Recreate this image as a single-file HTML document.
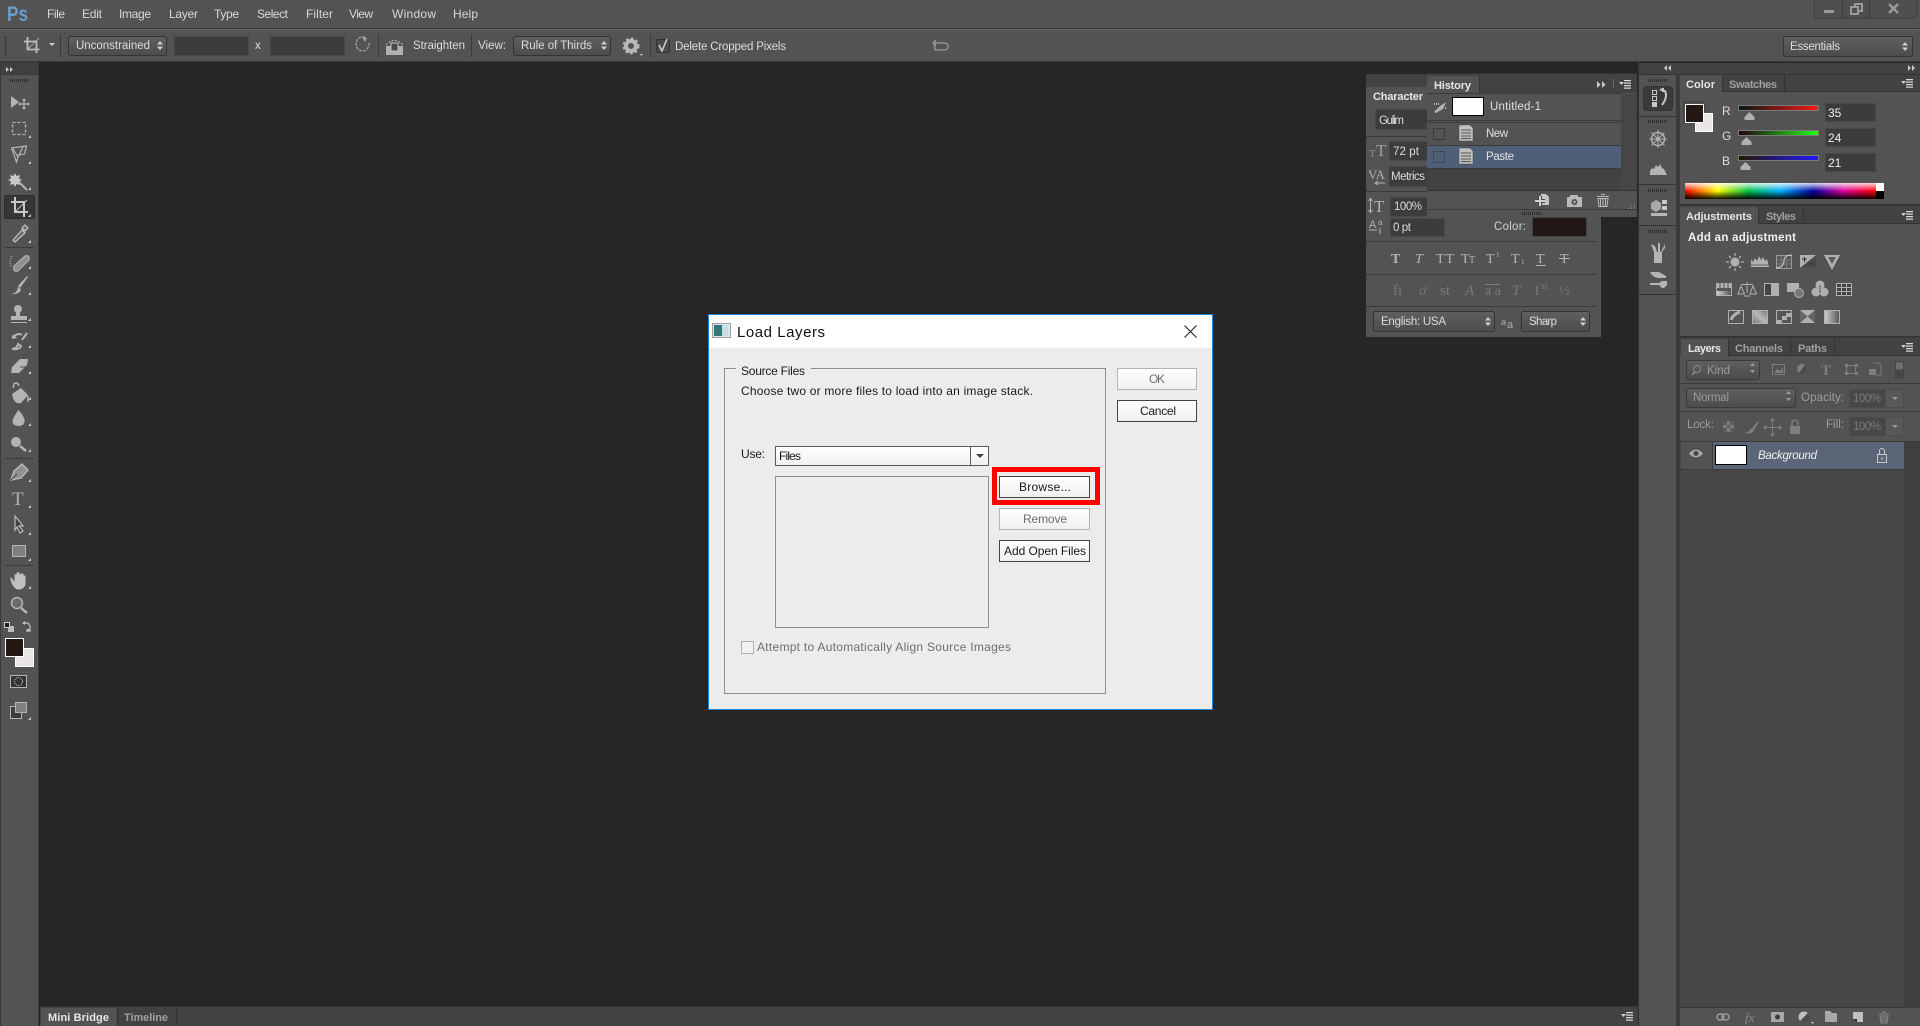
<!DOCTYPE html>
<html><head><meta charset="utf-8"><title>Load Layers</title>
<style>
html,body{margin:0;padding:0;background:#262626;width:1920px;height:1026px;overflow:hidden}
svg{display:block;position:absolute;left:0;top:0}
text{font-family:"Liberation Sans",sans-serif;font-size:11.5px;fill:#dcdcdc}
.m{font-size:12px;fill:#d8d8d8}
.t{fill:#e6e6e6;font-weight:bold;font-size:11px}
.g{fill:#a0a0a0;font-weight:bold;font-size:11px}
.f{fill:#3c3c3c;stroke:#484848}
.k{font-size:12px;fill:#1a1a1a}
.i{fill:#b4b4b4}
.b{fill:url(#bt);stroke:#444}
.a{fill:#d0d0d0}
.sf{font-family:"Liberation Serif",serif}
</style></head><body>
<svg width="1920" height="1026" viewBox="0 0 1920 1026" xmlns="http://www.w3.org/2000/svg">
<defs>
<linearGradient id="bt" x1="0" y1="0" x2="0" y2="1"><stop offset="0" stop-color="#ffffff"/><stop offset="1" stop-color="#f0f0f0"/></linearGradient>
<linearGradient id="sel" x1="0" y1="0" x2="0" y2="1"><stop offset="0" stop-color="#606060"/><stop offset="1" stop-color="#4c4c4c"/></linearGradient>
<linearGradient id="sr" x1="0" y1="0" x2="1" y2="0"><stop offset="0" stop-color="#001815"/><stop offset="1" stop-color="#ff1815"/></linearGradient>
<linearGradient id="sg" x1="0" y1="0" x2="1" y2="0"><stop offset="0" stop-color="#230015"/><stop offset="1" stop-color="#23ff15"/></linearGradient>
<linearGradient id="sb" x1="0" y1="0" x2="1" y2="0"><stop offset="0" stop-color="#231800"/><stop offset="1" stop-color="#2318ff"/></linearGradient>
<linearGradient id="hue" x1="0" y1="0" x2="1" y2="0"><stop offset="0" stop-color="#ff0000"/><stop offset=".17" stop-color="#ffff00"/><stop offset=".33" stop-color="#00c040"/><stop offset=".5" stop-color="#00b0ff"/><stop offset=".67" stop-color="#0000a0"/><stop offset=".83" stop-color="#e000a0"/><stop offset="1" stop-color="#ff0000"/></linearGradient>
<linearGradient id="wb" x1="0" y1="0" x2="0" y2="1"><stop offset="0" stop-color="#fff" stop-opacity=".85"/><stop offset=".5" stop-color="#fff" stop-opacity="0"/><stop offset=".5" stop-color="#000" stop-opacity="0"/><stop offset="1" stop-color="#000" stop-opacity=".95"/></linearGradient>
<linearGradient id="grey" x1="0" y1="0" x2="1" y2="0"><stop offset="0" stop-color="#d0d0d0"/><stop offset="1" stop-color="#555"/></linearGradient>
<linearGradient id="dg" x1="0" y1="1" x2="1" y2="0"><stop offset="0" stop-color="#777"/><stop offset=".5" stop-color="#b8b8b8"/><stop offset="1" stop-color="#777"/></linearGradient>
<g id="menuic"><path class="a" d="M0 2h5l-2.500 3z"/><path d="M5 0h7v1.300H5zM5 2.500h7v1.300H5zM5 5h7v1.300H5zM5 7.500h7v1.300H5z" fill="#d8d8d8"/></g>
<path id="cor" d="M0 3L3 0V3Z" fill="#c8c8c8"/>
<g id="updn"><path d="M0 3.500L3 0l3 3.500zM0 5.500h6L3 9z" fill="#cfcfcf"/></g>
</defs>

<!-- base -->
<rect width="1920" height="1026" fill="#262626"/>
<rect width="1920" height="28" fill="#535353"/>
<rect y="28" width="1920" height="1" fill="#3a3a3a"/>
<rect y="29" width="1920" height="33" fill="#535353"/>
<rect y="29" width="1920" height="1" fill="#666"/>
<rect y="61" width="1920" height="1" fill="#3b3b3b"/>

<!-- Menu -->
<text x="7" y="21" style="font-size:21px;font-weight:bold;fill:#6a9ccb" textLength="21" lengthAdjust="spacingAndGlyphs">Ps</text>
<text class="m" x="47" y="18" textLength="18">File</text>
<text class="m" x="82" y="18" textLength="20">Edit</text>
<text class="m" x="119" y="18" textLength="32">Image</text>
<text class="m" x="169" y="18" textLength="29">Layer</text>
<text class="m" x="214" y="18" textLength="25">Type</text>
<text class="m" x="257" y="18" textLength="31">Select</text>
<text class="m" x="306" y="18" textLength="27">Filter</text>
<text class="m" x="349" y="18" textLength="24">View</text>
<text class="m" x="392" y="18" textLength="44">Window</text>
<text class="m" x="453" y="18" textLength="25">Help</text>

<!-- Window buttons -->
<path d="M1814.500 0V15q0 3 3 3H1914q3 0 3-3V0" fill="#4f4f4f" stroke="#3e3e3e"/>
<path d="M1842.500 0V18M1869.500 0V18" stroke="#3e3e3e"/>
<rect x="1824" y="10" width="10" height="3" fill="#9a9a9a"/>
<path d="M1851 7h7v7h-7zM1855 7V4h7v7h-4" fill="none" stroke="#9a9a9a" stroke-width="2"/>
<path d="M1889 4l9 9M1898 4l-9 9" stroke="#9a9a9a" stroke-width="2.500"/>

<!-- Options bar -->
<path d="M5.500 36v19" stroke="#2e2e2e" stroke-dasharray="1 1" stroke-width="2"/>
<path d="M27.500 37v12.500h12M24 41.500h12.500V53" fill="none" stroke="#bcbcbc" stroke-width="1.800"/>
<path d="M28 49l11-11" stroke="#bcbcbc" stroke-width=".8"/>
<path d="M49 43h6l-3 3z" fill="#ccc"/>
<path d="M60.500 34v23" stroke="#3b3b3b"/>
<rect x="68.500" y="36.500" width="98" height="19" rx="2" fill="url(#sel)" stroke="#333"/>
<text x="76" y="49" textLength="74">Unconstrained</text>
<use href="#updn" x="157" y="41"/>
<rect x="174.500" y="36.500" width="74" height="19" class="f"/>
<text x="255" y="49">x</text>
<rect x="270.500" y="36.500" width="74" height="19" class="f"/>
<path d="M369 43a6.500 7 0 1 1-3-5" fill="none" stroke="#a0a0a0" stroke-width="1.300" stroke-dasharray="3 1"/><path d="M362 37l5 1-2 4z" fill="#a0a0a0"/>
<path d="M378.500 34v23" stroke="#3b3b3b"/>
<rect x="386" y="46" width="17" height="9" fill="#b0b0b0"/><path d="M386 45q8.500-9 17 0" fill="none" stroke="#b8b8b8" stroke-dasharray="2 1.500"/><rect x="391" y="43" width="7" height="8" fill="#4a4a4a" stroke="#c0c0c0"/>
<text x="413" y="49" textLength="52">Straighten</text>
<path d="M471.500 34v23" stroke="#3b3b3b"/>
<text x="478" y="49" textLength="28">View:</text>
<rect x="513.500" y="36.500" width="97" height="19" rx="2" fill="url(#sel)" stroke="#333"/>
<text x="521" y="49" textLength="71">Rule of Thirds</text>
<use href="#updn" x="601" y="41"/>
<circle cx="631" cy="46" r="5" fill="none" stroke="#b8b8b8" stroke-width="4"/><circle cx="631" cy="46" r="7.500" fill="none" stroke="#b8b8b8" stroke-width="2" stroke-dasharray="2.500 2.500"/><path d="M640 54h3l-1.500 2z" fill="#ccc"/>
<path d="M650.500 34v23" stroke="#3b3b3b"/>
<rect x="656.500" y="39.500" width="13" height="13" rx="2" fill="#4a4a4a" stroke="#303030"/>
<path d="M659 45l3 6 5-12" fill="none" stroke="#d0d0d0" stroke-width="1.500"/>
<text x="675" y="50" textLength="111">Delete Cropped Pixels</text>
<path d="M937 43h-3l1 7h9q4 0 4-3.500t-4-3.500h-7" fill="none" stroke="#909090" stroke-width="1.500"/><path d="M936 39v8l-4-4z" fill="#909090"/>
<rect x="1783.500" y="36.500" width="129" height="20" rx="2" fill="url(#sel)" stroke="#333"/>
<text x="1790" y="50" textLength="50">Essentials</text>
<use href="#updn" x="1902" y="42"/>

<!-- Tool bar -->
<rect x="0" y="62" width="39" height="964" fill="#3a3a3a"/>
<rect x="1" y="63" width="37" height="11" fill="#404040"/>
<path d="M6 67v5l3-2.500zM10 67v5l3-2.500z" fill="#c8c8c8"/>
<rect x="1" y="75" width="37" height="951" fill="#535353"/>
<path d="M10 80.500h19" stroke="#2e2e2e" stroke-dasharray="1 1" stroke-width="3"/>
<!-- move -->
<path d="M11 96l8 6-8 6z" class="i"/><path d="M24 99v10M19 104h10" stroke="#b4b4b4" stroke-width="1.200"/><path d="M24 98l-2 2.500h4zM24 110l-2-2.500h4zM18 104l2.500-2v4zM30 104l-2.500-2v4z" class="i"/>
<!-- marquee -->
<rect x="12.500" y="122.500" width="13" height="12" fill="none" stroke="#b4b4b4" stroke-width="1.300" stroke-dasharray="3 2"/><use href="#cor" x="28" y="135"/>
<!-- lasso -->
<path d="M11.500 148l15-2-2 8-6 1-2 7zM13 149l5 8 5-10" fill="none" stroke="#b4b4b4" stroke-width="1.200"/><use href="#cor" x="28" y="161"/>
<!-- wand -->
<path d="M15 173l1.500 3 3.500-1-1 3.500 3 1.500-3 1.500 1 3.500-3.500-1-1.500 3-1.500-3-3.500 1 1-3.500-3-1.500 3-1.500-1-3.500 3.500 1z" fill="#c8c8c8"/><path d="M19 182l8 8" stroke="#b4b4b4" stroke-width="2"/><use href="#cor" x="28" y="187"/>
<!-- crop selected -->
<rect x="4.500" y="195.500" width="30" height="23" rx="2" fill="#363636" stroke="#2c2c2c"/>
<path d="M15 197v15h13M11 202h13v15" fill="none" stroke="#c8c8c8" stroke-width="2"/><path d="M14 213l13-13" stroke="#c8c8c8"/>
<use href="#cor" x="28" y="214"/>
<!-- eyedropper -->
<path d="M13 240l9-10 3 3-10 9zM22 228l3-3 3 3-3 3z" fill="#6a6a6a" stroke="#bcbcbc" stroke-width="1.300"/><use href="#cor" x="28" y="240"/>
<path d="M5 247.500h29" stroke="#3a3a3a"/>
<!-- heal -->
<path d="M14 266l11-10q3-1 4 1t-1 4l-10 10q-3 1-4-1t0-4z" fill="#8f8f8f" stroke="#b4b4b4"/><path d="M12 256q-4 7 0 11" fill="none" stroke="#b4b4b4" stroke-dasharray="1 1.500" stroke-width="1.300"/><use href="#cor" x="28" y="266"/>
<!-- brush -->
<path d="M18 286l9-10 1 1-8 11zM10 294q7 0 8-7l3 2q-1 6-11 5z" class="i"/><use href="#cor" x="28" y="292"/>
<!-- stamp -->
<circle cx="18" cy="309" r="4" class="i"/><path d="M16 311h4v5h7v4H11v-4h5zM11 322h16v1H11z" class="i"/><use href="#cor" x="28" y="318"/>
<!-- history brush -->
<path d="M12 338q6-6 10-3M22 340l5-7M12 349q5 0 6-5l3 2q-1 4-9 3z" fill="none" stroke="#b4b4b4" stroke-width="2"/><path d="M13 334l-1 5 5-1z" class="i"/><use href="#cor" x="28" y="345"/>
<!-- eraser -->
<path d="M12 367l8-8h8l-1 6-8 8h-8z" class="i"/><path d="M20 367h7" stroke="#535353"/><use href="#cor" x="28" y="371"/>
<!-- bucket -->
<path d="M12 394l9-6 7 7-7 8q-7 2-9-9z" class="i"/><path d="M19 386q-2-5-5-2l-1 4M28 396v6" stroke="#b4b4b4" fill="none" stroke-width="1.500"/><use href="#cor" x="28" y="397"/>
<!-- blur -->
<path d="M18.500 410q7 8 6 12t-6 4-6-4q0-4 6-12z" class="i"/><use href="#cor" x="28" y="423"/>
<!-- dodge -->
<circle cx="16" cy="442" r="5" class="i"/><path d="M20 446l6 5" stroke="#b4b4b4" stroke-width="2.500"/><use href="#cor" x="28" y="449"/>
<path d="M5 458.500h29" stroke="#3a3a3a"/>
<!-- pen -->
<path d="M11 480l3-9 8-7 6 6-7 8z" fill="#909090" stroke="#bcbcbc" stroke-width="1.300"/><path d="M11 480l6-6" stroke="#444"/><use href="#cor" x="28" y="479"/>
<!-- type -->
<text class="sf" x="12" y="505" style="font-family:'Liberation Serif',serif;font-size:19px;fill:#b4b4b4">T</text><use href="#cor" x="28" y="505"/>
<!-- path select -->
<path d="M15 516l8 10h-4l4 5-3 2-3-6-2 3z" fill="#3e3e3e" stroke="#bcbcbc" stroke-width="1.200"/><use href="#cor" x="28" y="532"/>
<!-- rect -->
<rect x="12.500" y="545.500" width="13" height="11" fill="#808080" stroke="#b4b4b4"/><use href="#cor" x="28" y="558"/>
<path d="M5 565.500h29" stroke="#3a3a3a"/>
<!-- hand -->
<path d="M11 578l4 5v-8h2v-2h2v2h2v-1h2v2h2v8q-1 5-7 5-4 0-7-9z" fill="#c0c0c0" stroke="#c0c0c0"/><use href="#cor" x="28" y="586"/>
<!-- zoom -->
<circle cx="17" cy="603" r="5.500" fill="#6c6c6c" stroke="#b4b4b4" stroke-width="1.500"/><path d="M21 608l6 5" stroke="#b4b4b4" stroke-width="2.500"/>
<!-- colors -->
<rect x="8" y="626" width="6" height="6" fill="#bcbcbc"/><rect x="4.500" y="622.500" width="5" height="5" fill="#222" stroke="#ccc"/>
<path d="M23 623h5l2 3v5h-4" fill="none" stroke="#c0c0c0" stroke-width="1.200"/><path d="M25 621v4l-3-2zM26 629h5l-2.500 3z" fill="#c0c0c0"/>
<rect x="15.500" y="648.500" width="18" height="18" fill="#ebe6e6" stroke="#fff"/>
<rect x="5.500" y="638.500" width="18" height="18" fill="#231815" stroke="#fff"/>
<rect x="10.500" y="675.500" width="16" height="12" fill="#333" stroke="#b4b4b4"/><circle cx="18.500" cy="681.500" r="4" fill="none" stroke="#ccc" stroke-dasharray="1 1"/>
<rect x="10.500" y="706.500" width="11" height="12" fill="#3c3c3c" stroke="#b4b4b4"/><rect x="15.500" y="702.500" width="11" height="10" fill="#808080" stroke="#b4b4b4"/><use href="#cor" x="28" y="717"/>

<!-- Bottom tabs -->
<rect x="40" y="1006" width="1598" height="20" fill="#424242"/>
<rect x="40" y="1006" width="1598" height="1" fill="#333"/>
<rect x="41" y="1008" width="76" height="18" fill="#535353"/>
<path d="M117.500 1008v18M176.500 1008v18" stroke="#333"/>
<text class="t" x="48" y="1021" textLength="61">Mini Bridge</text>
<text class="g" x="124" y="1021" textLength="44">Timeline</text>
<use href="#menuic" x="1621" y="1012"/>

<!-- Character Panel -->
<rect x="1366" y="74" width="235" height="263" fill="#535353"/>
<rect x="1366" y="74" width="235" height="13" fill="#424242"/>
<text class="t" x="1373" y="100" textLength="50">Character</text>
<rect x="1375.500" y="109.500" width="60" height="20" class="f"/>
<text x="1379" y="124" textLength="25">Gulim</text>
<path d="M1366 136.500h61" stroke="#3b3b3b"/>
<rect x="1389.500" y="141.500" width="50" height="19" class="f"/>
<text x="1393" y="155" textLength="26">72 pt</text>
<text x="1376" y="156" style="font-family:'Liberation Serif',serif;font-size:17px;fill:#a0a0a0">T</text>
<text x="1369" y="157" style="font-family:'Liberation Serif',serif;font-size:11px;fill:#8c8c8c">T</text>
<rect x="1389" y="166.500" width="50" height="20" class="f"/>
<text x="1391" y="180" textLength="34">Metrics</text>
<text x="1368" y="179" style="font-family:'Liberation Serif',serif;font-size:13px;fill:#b0b0b0" textLength="17" lengthAdjust="spacingAndGlyphs">VA</text>
<path d="M1376 183h9M1378 181l-3 2 3 2" stroke="#b0b0b0" fill="none"/>
<path d="M1366 191.500h61" stroke="#3b3b3b"/>
<rect x="1390.500" y="197.500" width="50" height="19" class="f"/>
<text x="1394" y="210" textLength="28">100%</text>
<text x="1374" y="212" style="font-family:'Liberation Serif',serif;font-size:17px;fill:#b4b4b4">T</text><path d="M1370.500 199v13M1368.500 201l2-2.500 2 2.500M1368.500 210l2 2.500 2-2.500" stroke="#b4b4b4" fill="none"/>
<rect x="1390.500" y="218.500" width="54" height="18" class="f"/>
<text x="1393" y="231" textLength="18">0 pt</text>
<text x="1369" y="228" style="font-size:11px;fill:#b0b0b0">A</text><text x="1378" y="225" style="font-size:8px;fill:#b0b0b0">a</text><path d="M1369 230h8M1380 228v6" stroke="#b0b0b0"/>
<text x="1494" y="230" textLength="32" style="fill:#d0d0d0">Color:</text>
<rect x="1532.500" y="217.500" width="54" height="19" fill="#231815" stroke="#444"/>
<path d="M1366 241.500h231M1366 274.500h231M1366 306.500h231" stroke="#3b3b3b"/>
<text x="1391" y="263" style="font-family:'Liberation Serif',serif;font-size:14px;font-weight:bold;fill:#b4b4b4">T</text>
<text x="1415" y="263" style="font-family:'Liberation Serif',serif;font-size:14px;font-style:italic;fill:#b4b4b4">T</text>
<text x="1436" y="263" style="font-family:'Liberation Serif',serif;font-size:14px;fill:#b4b4b4" textLength="18">TT</text>
<text x="1461" y="263" style="font-family:'Liberation Serif',serif;font-size:14px;fill:#b4b4b4">T</text><text x="1469" y="263" style="font-family:'Liberation Serif',serif;font-size:10px;fill:#b4b4b4">T</text>
<text x="1486" y="263" style="font-family:'Liberation Serif',serif;font-size:14px;fill:#b4b4b4">T</text><text x="1496" y="257" style="font-family:'Liberation Serif',serif;font-size:7px;fill:#b4b4b4">1</text>
<text x="1511" y="263" style="font-family:'Liberation Serif',serif;font-size:14px;fill:#b4b4b4">T</text><text x="1521" y="264" style="font-family:'Liberation Serif',serif;font-size:7px;fill:#b4b4b4">1</text>
<text x="1536" y="263" style="font-family:'Liberation Serif',serif;font-size:14px;fill:#b4b4b4">T</text><path d="M1536 265.500h10" stroke="#b4b4b4"/>
<text x="1560" y="263" style="font-family:'Liberation Serif',serif;font-size:14px;fill:#b4b4b4">T</text><path d="M1559 258.500h11" stroke="#b4b4b4"/>
<text x="1393" y="295" style="font-family:'Liberation Serif',serif;font-size:15px;fill:#7a7a7a">fi</text>
<text x="1419" y="295" style="font-family:'Liberation Serif',serif;font-size:14px;font-style:italic;fill:#7a7a7a">ơ</text>
<text x="1440" y="295" style="font-family:'Liberation Serif',serif;font-size:15px;fill:#7a7a7a">st</text>
<text x="1465" y="295" style="font-family:'Liberation Serif',serif;font-size:15px;font-style:italic;fill:#7a7a7a">A</text>
<text x="1485" y="295" style="font-family:'Liberation Serif',serif;font-size:14px;fill:#7a7a7a" textLength="16">aa</text><path d="M1485 284.500h15" stroke="#7a7a7a"/>
<text x="1512" y="295" style="font-family:'Liberation Serif',serif;font-size:15px;font-style:italic;fill:#7a7a7a">T</text>
<text x="1533" y="295" style="font-family:'Liberation Serif',serif;font-size:15px;fill:#7a7a7a">1</text><text x="1541" y="289" style="font-family:'Liberation Serif',serif;font-size:10px;fill:#7a7a7a">st</text>
<text x="1559" y="295" style="font-family:'Liberation Serif',serif;font-size:14px;fill:#7a7a7a">½</text>
<rect x="1373.500" y="311.500" width="121" height="20" rx="2" fill="url(#sel)" stroke="#333"/>
<text x="1381" y="325" textLength="65">English: USA</text>
<use href="#updn" x="1485" y="317"/>
<text x="1501" y="325" style="font-size:9px;fill:#b0b0b0">a</text><text x="1507" y="328" style="font-size:11px;fill:#b0b0b0">a</text>
<rect x="1521.500" y="311.500" width="68" height="20" rx="2" fill="url(#sel)" stroke="#333"/>
<text x="1529" y="325" textLength="28">Sharp</text>
<use href="#updn" x="1580" y="317"/>

<!-- History Panel -->
<rect x="1427" y="73" width="210" height="144" fill="#535353"/>
<rect x="1427" y="73" width="210" height="20" fill="#424242"/>
<rect x="1427" y="73" width="210" height="1" fill="#333"/>
<rect x="1427" y="76" width="52" height="17" fill="#535353"/>
<path d="M1479.500 76v17" stroke="#333"/>
<text class="t" x="1434" y="89" textLength="37">History</text>
<path d="M1597 81v7l3.500-3.500zM1602 81v7l3.500-3.500z" fill="#c8c8c8"/>
<path d="M1613.500 79v9" stroke="#666"/>
<use href="#menuic" x="1619" y="80"/>
<rect x="1427" y="93" width="194" height="1" fill="#3a3a3a"/>
<rect x="1621" y="94" width="16" height="97" fill="#464646"/>
<rect x="1427" y="94" width="194" height="27" fill="#535353"/>
<rect x="1452.500" y="97.500" width="31" height="18" fill="#fff" stroke="#000"/>
<path d="M1434 112l6-6 6-4-3 7-7 4" fill="#b4b4b4"/><path d="M1434 104h6M1446 108h-2" stroke="#b4b4b4" stroke-width="2" stroke-dasharray="1 1"/>
<text x="1490" y="110" textLength="51" style="fill:#e0e0e0">Untitled-1</text>
<path d="M1427 120.500h194M1427 122.500h194" stroke="#3b3b3b"/>
<rect x="1427" y="123" width="194" height="22" fill="#535353"/>
<rect x="1433.500" y="128.500" width="11" height="11" fill="none" stroke="#3a3a3a"/>
<path d="M1459 125h11l3 3v13h-14z" fill="#c0c0c0" stroke="#444" stroke-width=".5"/><path d="M1461 130h10M1461 133h10M1461 136h10M1461 138.500h10" stroke="#555"/>
<text x="1486" y="137" textLength="22" style="fill:#e0e0e0">New</text>
<rect x="1427" y="146" width="194" height="22" fill="#4f5f77"/>
<path d="M1427 145.500h194M1427 168.500h194" stroke="#3b3b3b"/>
<rect x="1433.500" y="151.500" width="11" height="11" fill="none" stroke="#3e4858"/>
<path d="M1459 148h11l3 3v13h-14z" fill="#c0c0c0" stroke="#444" stroke-width=".5"/><path d="M1461 153h10M1461 156h10M1461 159h10M1461 161.500h10" stroke="#555"/>
<text x="1486" y="160" textLength="28" style="fill:#e0e0e0">Paste</text>
<rect x="1427" y="169" width="194" height="21" fill="#424242"/>
<rect x="1427" y="190" width="210" height="1" fill="#333"/>
<path d="M1541 194h5l3 3v8h-8z" fill="#c4c4c4"/>
<path d="M1535 201h10M1540 196v10" stroke="#474747" stroke-width="4"/><path d="M1535 201h10M1540 196v10" stroke="#d0d0d0" stroke-width="2"/>
<rect x="1567" y="197" width="15" height="10" fill="#b8b8b8"/><rect x="1570" y="195" width="8" height="3" fill="#b8b8b8"/><circle cx="1574.500" cy="202" r="3" fill="#535353"/><circle cx="1574.500" cy="202" r="1.200" fill="#b8b8b8"/>
<path d="M1597 196.500h12M1601 194.500h4M1598 198.500h10l-1 8h-8zM1600.500 199v7M1603 199v7M1605.500 199v7" stroke="#b8b8b8" fill="none"/>
<path d="M1427 209.500h210" stroke="#3b3b3b"/>
<path d="M1522 213.500h19" stroke="#2e2e2e" stroke-width="3" stroke-dasharray="1 1"/>
<path d="M1635 204v1h-1v-1zM1632 206v1h-1v-1zM1635 206v1h-1v-1zM1629 208v1h-1v-1zM1632 208v1h-1v-1zM1635 208v1h-1v-1z" fill="#888"/>

<!-- Dock -->
<rect x="1638" y="62" width="1" height="964" fill="#333"/>
<rect x="1639" y="63" width="37" height="963" fill="#535353"/>
<rect x="1639" y="63" width="281" height="11" fill="#424242"/>
<rect x="1639" y="74" width="281" height="1" fill="#333"/>
<path d="M1671 65v6l-3-3zM1667 65v6l-3-3zM1908 65v6l3-3zM1912 65v6l3-3z" fill="#c8c8c8"/>
<rect x="1676" y="75" width="4" height="951" fill="#3a3a3a"/>
<path d="M1648 80.500h19M1648 121.500h19M1648 190.500h19M1648 231.500h19" stroke="#2e2e2e" stroke-width="3" stroke-dasharray="1 1"/>
<rect x="1643.500" y="86.500" width="29" height="24" rx="3" fill="#3a3a3a" stroke="#333"/>
<path d="M1652.500 90.500h4v4h-4zM1652.500 96.500h4v4h-4z" fill="none" stroke="#c8c8c8"/><rect x="1652" y="102" width="5" height="5" fill="#c8c8c8"/>
<path d="M1660 90l3-1v2h2q3 6-3 14" fill="none" stroke="#c8c8c8" stroke-width="2"/>
<path d="M1639 116.500h37M1639 184.500h37M1639 225.500h37M1639 294.500h37" stroke="#333"/>
<circle cx="1658" cy="139" r="6.500" fill="none" stroke="#b0b0b0" stroke-width="1.500"/><circle cx="1658" cy="139" r="2" fill="#b0b0b0"/>
<path d="M1658 130v18M1649 139h18M1651.500 132.500l13 13M1664.500 132.500l-13 13" stroke="#b0b0b0"/>
<path d="M1650 175v-4l2-3 2 1 2-4 2 2 2-3 2 4 2 1 3 6z" fill="#b4b4b4"/>
<path d="M1651 203l5-3 5 3v6l-5 3-5-3z" fill="#a8a8a8"/><path d="M1662 200h5v4h-5zM1662 206h5v4h-5z" fill="#c8c8c8"/><rect x="1651" y="213" width="16" height="3" fill="#b8b8b8"/>
<path d="M1654 252h8v11h-8z" fill="#b4b4b4"/><path d="M1654 252l-3-8 4 2 2 6M1658 252v-10l2 2v8M1661 252l4-8v4l-3 4" fill="#b4b4b4"/>
<path d="M1650 272h9l7 4 0 2h-7q-6 0-9-6zM1650 283h9l3-2 5 0v4l-3 3h-2l-3-3h-9z" fill="#b4b4b4"/>

<!-- Right panels -->
<rect x="1680" y="75" width="240" height="951" fill="#535353"/>
<rect x="1679" y="75" width="241" height="16" fill="#424242"/>
<rect x="1680" y="75" width="42" height="17" fill="#535353"/>
<path d="M1722.500 75v16M1784.500 75v16" stroke="#333"/>
<path d="M1722 91.500h198" stroke="#333"/>
<text class="t" x="1686" y="88" textLength="29">Color</text>
<text class="g" x="1729" y="88" textLength="48">Swatches</text>
<use href="#menuic" x="1901" y="79"/>
<rect x="1684" y="102" width="20" height="21" fill="none" stroke="#3a3a3a"/>
<rect x="1695.500" y="113.500" width="17" height="18" fill="#ebe6e6" stroke="#fff"/>
<rect x="1685.500" y="104.500" width="18" height="18" fill="#231815" stroke="#fff"/>
<text x="1722" y="115" style="font-size:12px;fill:#dcdcdc">R</text>
<text x="1722" y="140" style="font-size:12px;fill:#dcdcdc">G</text>
<text x="1722" y="165" style="font-size:12px;fill:#dcdcdc">B</text>
<rect x="1738.500" y="105.500" width="80" height="5" fill="url(#sr)" stroke="#7a7a7a"/>
<rect x="1738.500" y="130.500" width="80" height="5" fill="url(#sg)" stroke="#7a7a7a"/>
<rect x="1738.500" y="155.500" width="80" height="5" fill="url(#sb)" stroke="#7a7a7a"/>
<path d="M1749.500 112l5 5v3h-10v-3zM1746.500 137l5 5v3h-10v-3zM1745.500 162l5 5v3h-10v-3z" fill="#b0b0b0"/>
<rect x="1825.500" y="103.500" width="50" height="18" class="f"/>
<rect x="1825.500" y="128.500" width="50" height="18" class="f"/>
<rect x="1825.500" y="153.500" width="50" height="18" class="f"/>
<text x="1828" y="117" style="font-size:12px;fill:#f0f0f0">35</text>
<text x="1828" y="142" style="font-size:12px;fill:#f0f0f0">24</text>
<text x="1828" y="167" style="font-size:12px;fill:#f0f0f0">21</text>
<rect x="1685" y="183" width="191" height="16" fill="url(#hue)"/><rect x="1685" y="183" width="191" height="16" fill="url(#wb)"/>
<rect x="1876" y="183" width="8" height="8" fill="#fff"/><rect x="1876" y="191" width="8" height="8" fill="#000"/>
<path d="M1680 204.500h240" stroke="#333"/><rect x="1680" y="205" width="240" height="1" fill="#3a3a3a"/>

<!-- Adjustments -->
<rect x="1680" y="206" width="240" height="17" fill="#424242"/>
<rect x="1680" y="207" width="78" height="17" fill="#535353"/>
<path d="M1758.500 207v16M1803.500 207v16" stroke="#333"/><path d="M1758 223.500h162" stroke="#333"/>
<text class="t" x="1686" y="220" textLength="66">Adjustments</text>
<text class="g" x="1766" y="220" textLength="30">Styles</text>
<use href="#menuic" x="1901" y="211"/>
<text x="1688" y="241" textLength="108" style="font-weight:bold;font-size:11.5px;fill:#f0f0f0">Add an adjustment</text>
<g fill="#b0b0b0" stroke="none">
<circle cx="1735" cy="262" r="4.500"/><path d="M1735 253v3M1735 268v3M1726 262h3M1741 262h3M1729 256l2 2M1739 266l2 2M1741 256l-2 2M1731 266l-2 2" stroke="#b0b0b0" stroke-width="1.300"/>
<path d="M1751 267v-8l2 3 2-4 2 3 2-5 2 4 2-3 2 4 2-2 2 8z"/><path d="M1751 265h18" stroke="#535353" stroke-width=".7"/>
<rect x="1776.500" y="255.500" width="15" height="13" fill="#5a5a5a" stroke="#9a9a9a"/><path d="M1776 268q8-1 8-7t8-6" stroke="#d0d0d0" fill="none"/><path d="M1781.500 256v12M1786.500 256v12M1777 260h15M1777 264h15" stroke="#8a8a8a" stroke-width=".6"/>
<rect x="1800" y="255" width="16" height="13"/><path d="M1800 268l16-13v13z" fill="#4a4a4a"/><path d="M1802 259h5M1804.500 257v5M1809 264h5" stroke="#333"/>
<path d="M1824 255h16l-8 15z"/><path d="M1828 257h8l-4 7z" fill="#5a5a5a"/>
<rect x="1716.500" y="283.500" width="15" height="12" fill="#555" stroke="#b0b0b0"/><rect x="1716" y="283" width="16" height="5"/><path d="M1720 283v5M1724 283v5M1728 283v5" stroke="#555"/><rect x="1717" y="291" width="14" height="4" fill="url(#grey)"/>
<path d="M1747 282v11M1741 284.500h12M1738 294h6.500l-3.500-8zM1750 294h6.500l-3.500-8z" stroke="#b0b0b0" fill="none"/><path d="M1744 296h6" stroke="#b0b0b0"/>
<rect x="1764" y="283" width="15" height="13" fill="#b0b0b0"/><rect x="1765" y="284" width="6" height="11" fill="#444"/>
<rect x="1787" y="283" width="12" height="9"/><circle cx="1799" cy="293" r="4.500" fill="#777" stroke="#b0b0b0"/>
<circle cx="1820" cy="285" r="4.500"/><circle cx="1816" cy="292" r="4.500"/><circle cx="1824" cy="292" r="4.500"/><path d="M1820 285v8" stroke="#535353"/>
<rect x="1836.500" y="283.500" width="15" height="12" fill="#444" stroke="#b0b0b0"/><path d="M1841.500 283v12M1846.500 283v12M1836 287.500h15M1836 291.500h15" stroke="#b0b0b0"/>
<rect x="1728.500" y="310.500" width="15" height="13" fill="#555" stroke="#b0b0b0"/><path d="M1731 320q2-6 9-8" stroke="#b0b0b0" stroke-width="3" fill="none"/>
<rect x="1752.500" y="310.500" width="15" height="13" fill="url(#dg)" stroke="#b0b0b0"/>
<rect x="1776.500" y="310.500" width="15" height="13" fill="#555" stroke="#b0b0b0"/><path d="M1776 320h6v-4h4v-3h5v4h-4v3h-5v3h-6z"/>
<rect x="1800" y="310" width="15" height="13" fill="#b0b0b0"/><path d="M1800 310l7.500 6.500L1800 323zM1815 310l-7.500 6.500L1815 323z" fill="#666"/>
<rect x="1824.500" y="310.500" width="15" height="13" fill="url(#grey)" stroke="#b0b0b0"/>
</g>
<path d="M1680 336.500h240" stroke="#333"/><rect x="1680" y="337" width="240" height="1" fill="#3a3a3a"/>

<!-- Layers -->
<rect x="1680" y="338" width="240" height="17" fill="#424242"/>
<rect x="1681" y="339" width="47" height="17" fill="#535353"/>
<path d="M1728.500 339v16M1790.500 339v16M1834.500 339v16" stroke="#333"/><path d="M1728 355.500h192" stroke="#333"/>
<text class="t" x="1688" y="352" textLength="33">Layers</text>
<text class="g" x="1735" y="352" textLength="48">Channels</text>
<text class="g" x="1798" y="352" textLength="29">Paths</text>
<use href="#menuic" x="1901" y="343"/>
<rect x="1686.500" y="360.500" width="73" height="19" rx="2" fill="url(#sel)" stroke="#3a3a3a"/>
<circle cx="1697" cy="369" r="3.500" fill="none" stroke="#8c8c8c"/><path d="M1695 372l-3 3" stroke="#8c8c8c" stroke-width="1.500"/>
<text x="1707" y="374" textLength="23" style="fill:#9c9c9c">Kind</text>
<path d="M1750 366l2.500-3 2.500 3zM1750 370h5l-2.500 3z" fill="#9c9c9c"/>
<rect x="1772.500" y="364.500" width="12" height="10" fill="none" stroke="#7e7e7e"/><path d="M1774 373l3-4 3 2 3-3v5z" fill="#7e7e7e"/>
<circle cx="1802" cy="369" r="5" fill="#7e7e7e"/><path d="M1799 373l6-8a5 5 0 0 1-6 8z" fill="#4a4a4a"/>
<text x="1821" y="375" style="font-family:'Liberation Serif',serif;font-size:15px;font-weight:bold;fill:#7e7e7e">T</text>
<path d="M1846.500 365.500h9v8h-9z" fill="none" stroke="#7e7e7e"/><path d="M1845 364h3v3h-3zM1855 364h3v3h-3zM1845 372h3v3h-3zM1855 372h3v3h-3z" fill="#7e7e7e"/>
<path d="M1873 363h6l2 2v10h-6" fill="none" stroke="#7e7e7e"/><rect x="1869" y="369" width="7" height="6" fill="#7e7e7e"/>
<rect x="1895.500" y="362" width="8" height="8" fill="#6e6e6e" stroke="#444"/><rect x="1895.500" y="370" width="8" height="8" fill="#474747" stroke="#444"/>
<path d="M1680 383.500h240" stroke="#3b3b3b"/>
<rect x="1686.500" y="388.500" width="109" height="19" rx="2" fill="url(#sel)" stroke="#3a3a3a"/>
<text x="1693" y="401" textLength="36" style="fill:#9c9c9c">Normal</text>
<path d="M1786 394l2.500-3 2.500 3zM1786 398h5l-2.500 3z" fill="#9c9c9c"/>
<text x="1801" y="401" textLength="43" style="fill:#9c9c9c">Opacity:</text>
<rect x="1849.500" y="389.500" width="36" height="18" fill="#474747" stroke="#4c4c4c"/>
<rect x="1885.500" y="389.500" width="18" height="18" fill="#585858" stroke="#4c4c4c"/>
<text x="1853" y="402" textLength="28" style="fill:#7a7a7a">100%</text>
<path d="M1892 397h6l-3 3z" fill="#999"/>
<path d="M1680 411.500h240" stroke="#3b3b3b"/>
<text x="1687" y="428" textLength="27" style="fill:#9c9c9c">Lock:</text>
<rect x="1723" y="421" width="11" height="11" fill="#7e7e7e"/><path d="M1723 421h4v4h-4zM1730 421h4v4h-4zM1727 425h3v3h-3zM1723 428h4v4h-4zM1730 428h4v4h-4z" fill="#5c5c5c"/>
<path d="M1744 433q6-1 7-5l3 2q-2 5-10 3zM1752 428l6-7 1 1-5 8z" fill="#7e7e7e"/>
<path d="M1772.500 420v15M1765 427.500h15" stroke="#7e7e7e"/><path d="M1772.500 418l-2.500 3h5zM1772.500 437l-2.500-3h5zM1763 427.500l3-2.500v5zM1782 427.500l-3-2.500v5z" fill="#7e7e7e"/>
<rect x="1790" y="426" width="10" height="8" fill="#7e7e7e"/><path d="M1792 426v-3a3 3 0 0 1 6 0v3" fill="none" stroke="#7e7e7e" stroke-width="1.500"/>
<text x="1826" y="428" textLength="18" style="fill:#9c9c9c">Fill:</text>
<rect x="1849.500" y="417.500" width="36" height="18" fill="#474747" stroke="#4c4c4c"/>
<rect x="1885.500" y="417.500" width="18" height="18" fill="#585858" stroke="#4c4c4c"/>
<text x="1853" y="430" textLength="28" style="fill:#7a7a7a">100%</text>
<path d="M1892 425h6l-3 3z" fill="#999"/>
<path d="M1680 441.500h240" stroke="#3b3b3b"/>
<rect x="1680" y="442" width="224" height="566" fill="#474747"/>
<rect x="1681" y="442" width="31" height="27" fill="#535353"/>
<path d="M1689 453.500q7-8 14 0-7 8-14 0z" fill="#a8a8a8"/><circle cx="1696" cy="453.500" r="2.500" fill="#4a4a4a"/>
<rect x="1712" y="442" width="192" height="27" fill="#5a6577"/>
<path d="M1712.500 442v27" stroke="#3b3b3b"/>
<rect x="1715.500" y="445.500" width="31" height="19" fill="#fff" stroke="#000"/>
<text x="1758" y="459" textLength="59" style="font-style:italic;fill:#f0f0f0">Background</text>
<rect x="1877.500" y="454.500" width="9" height="8" fill="none" stroke="#c8c8c8"/><path d="M1879.500 454v-3a2.500 2.500 0 0 1 5 0v3" fill="none" stroke="#c8c8c8"/><path d="M1882 457v3" stroke="#c8c8c8"/>
<path d="M1680 469.500h224" stroke="#3b3b3b"/>
<rect x="1904" y="442" width="16" height="566" fill="#3f3f3f"/>
<rect x="1680" y="1008" width="240" height="18" fill="#535353"/>
<rect x="1680" y="1007" width="240" height="1" fill="#3a3a3a"/>
<g>
<rect x="1717" y="1014" width="7" height="6" rx="3" fill="none" stroke="#9c9c9c" stroke-width="1.500"/><rect x="1722" y="1014" width="7" height="6" rx="3" fill="none" stroke="#9c9c9c" stroke-width="1.500"/>
<text x="1745" y="1022" style="font-family:'Liberation Serif',serif;font-style:italic;font-size:13px;fill:#8a8a8a">fx</text>
<rect x="1771" y="1012" width="13" height="10" fill="#a8a8a8"/><circle cx="1777.500" cy="1017" r="2.500" fill="#3a3a3a"/>
<circle cx="1804" cy="1017" r="5.500" fill="#c0c0c0"/><path d="M1800 1021l8-8a5.500 5.500 0 0 1-8 8z" fill="#4a4a4a"/><path d="M1811 1022h3l-1.500 2z" fill="#ccc"/>
<path d="M1825 1011h5l2 2h5v9h-12z" fill="#a8a8a8"/>
<path d="M1853 1012h10v10h-6v-3h-4z" fill="#c0c0c0"/><path d="M1853 1019h4v3z" fill="#333"/>
<path d="M1879 1014h10M1882 1012h4M1880 1016h8l-1 7h-6zM1882 1017v5M1884 1017v5M1886 1017v5" stroke="#8a8a8a" fill="none"/>
</g>

<!-- Dialog -->
<rect x="708.500" y="314.500" width="504" height="395" fill="#ececec" stroke="#1a85d6"/>
<rect x="709" y="315" width="503" height="33" fill="#fff"/>
<rect x="712.500" y="323.500" width="18" height="14" fill="#dfe6e8" stroke="#a0a0a0"/><rect x="714" y="325" width="8" height="11" fill="#2e7a74"/><rect x="722" y="325" width="6" height="11" fill="#c8dde0"/>
<text x="737" y="337" textLength="88" style="font-size:15px;fill:#111">Load Layers</text>
<path d="M1184.500 325.500l12 12M1196.500 325.500l-12 12" stroke="#222" stroke-width="1.100"/>
<path d="M736 368.500h-11.500v325h381v-325H811" fill="none" stroke="#8e8e8e"/>
<text class="k" x="741" y="375" textLength="64">Source Files</text>
<text class="k" x="741" y="395" textLength="292">Choose two or more files to load into an image stack.</text>
<text class="k" x="741" y="458" textLength="24">Use:</text>
<rect x="775.500" y="446.500" width="213" height="19" fill="url(#bt)" stroke="#5a5a5a"/>
<path d="M970.500 447v18" stroke="#5a5a5a"/><path d="M976 454h8l-4 4z" fill="#444"/>
<text class="k" x="779" y="460" textLength="22">Files</text>
<rect x="775.500" y="476.500" width="213" height="151" fill="#ececec" stroke="#8e8e8e"/>
<rect x="994.500" y="469.500" width="103" height="33" fill="none" stroke="#fe0000" stroke-width="5"/>
<rect x="999.500" y="476.500" width="90" height="21" class="b"/>
<text class="k" x="1019" y="491" textLength="52">Browse...</text>
<rect x="999.500" y="508.500" width="90" height="21" fill="url(#bt)" stroke="#b4b4b4"/>
<text class="k" x="1023" y="523" textLength="44" style="fill:#6e6e6e">Remove</text>
<rect x="999.500" y="540.500" width="90" height="21" class="b"/>
<text class="k" x="1004" y="555" textLength="82">Add Open Files</text>
<rect x="1117.500" y="368.500" width="79" height="21" fill="url(#bt)" stroke="#b4b4b4"/>
<text class="k" x="1149" y="383" textLength="16" style="fill:#6e6e6e">OK</text>
<rect x="1117.500" y="400.500" width="79" height="21" class="b"/>
<text class="k" x="1140" y="415" textLength="36">Cancel</text>
<rect x="741.500" y="641.500" width="12" height="12" fill="#f2f2f2" stroke="#b0b0b0"/>
<text class="k" x="757" y="651" textLength="254" style="fill:#6e6e6e">Attempt to Automatically Align Source Images</text>
</svg>
</body></html>
